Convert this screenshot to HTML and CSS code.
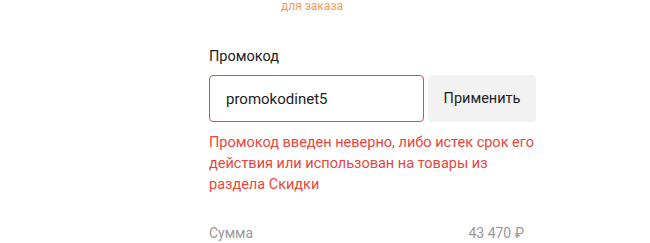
FILE: index.html
```html
<!DOCTYPE html>
<html lang="ru">
<head>
    <meta charset="UTF-8">
    <title>Промокод</title>
    <link rel="stylesheet" href="styles.css">
</head>
<body>
<div class="cart">
    <p class="hint">для заказа</p>

    <div class="promo">
        <p class="promo-title">Промокод</p>
        <div class="promo-row">
            <input class="promo-input error" value="promokodinet5">
            <button class="promo-btn">Применить</button>
        </div>
        <p class="promo-error">Промокод введен неверно, либо истек срок его действия или использован на товары из раздела Скидки</p>
    </div>

    <div class="total">
        <span class="total-label">Сумма</span>
        <span class="total-value">43 470 ₽</span>
    </div>
</div>
</body>
</html>
```

FILE: styles.css
```css
body {
    margin: 0;
    background: #fff;
    font-family: Roboto, "Noto Sans", sans-serif;
    color: #222;
}

.cart {
    width: 327px;
    margin-left: 209px;
}

.hint {
    margin: 0 0 0 72px;
    font-size: 12px;
    line-height: 13px;
    color: #f39c5a;
}

.promo {
    margin-top: 34px;
}

.promo-title {
    margin: 0;
    font-size: 14.5px;
    line-height: 20px;
}

.promo-row {
    display: flex;
    gap: 4px;
    margin-top: 8px;
}

.promo-input {
    width: 215px;
    height: 47px;
    box-sizing: border-box;
    border: 1px solid #ccc;
    border-radius: 4px;
    padding: 0 16px;
    font-family: inherit;
    font-size: 15px;
    color: #222;
    outline: none;
}

.promo-input.error {
    border-color: #e04a3f;
}

.promo-btn {
    flex: 1;
    height: 47px;
    border: 0;
    border-radius: 4px;
    background: #f2f2f2;
    font-family: inherit;
    font-size: 14.5px;
    color: #222;
}

.promo-error {
    margin: 10px 0 0;
    font-size: 14.5px;
    line-height: 21px;
    color: #e8473d;
}

.total {
    display: flex;
    justify-content: space-between;
    margin-top: 30px;
    padding-right: 12px;
    font-size: 14px;
    color: #999;
}
```
